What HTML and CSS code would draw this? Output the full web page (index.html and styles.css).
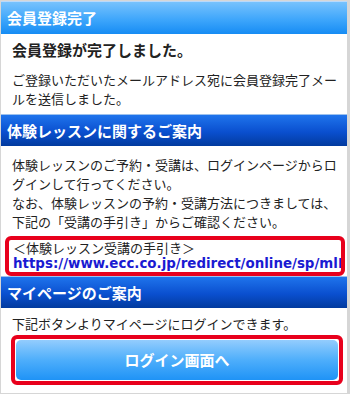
FILE: index.html
```html
<!DOCTYPE html>
<html>
	<head>
		<meta charset="utf-8">
		<title>会員登録完了</title>
		<link rel="stylesheet" href="styles.css">
	</head>
	<body>
		<div class="page">
			<h1 class="head head-light">会員登録完了</h1>
			<div class="sec">
				<p class="lead">会員登録が完了しました。</p>
				<p class="txt">ご登録いただいたメールアドレス宛に会員登録完了メールを送信しました。</p>
			</div>
			<h2 class="head">体験レッスンに関するご案内</h2>
			<div class="sec sec-info">
				<p class="txt">体験レッスンのご予約・受講は、ログインページからログインして行ってください。<br>なお、体験レッスンの予約・受講方法につきましては、下記の「受講の手引き」からご確認ください。</p>
			</div>
			<div class="mark guide">
				<p class="txt">＜体験レッスン受講の手引き＞</p>
				<a class="link" href="#">https://www.ecc.co.jp/redirect/online/sp/mlI/tebiki</a>
			</div>
			<h2 class="head">マイページのご案内</h2>
			<div class="sec sec-login">
				<p class="txt">下記ボタンよりマイページにログインできます。</p>
			</div>
			<div class="mark btnbox">
				<a class="btn" href="#">ログイン画面へ</a>
			</div>
		</div>
	</body>
</html>
```

FILE: styles.css
```css
*{
	padding: 0;
	margin: 0;
	border: 0;
}
body{
	background: #fff;
	font-family: "Noto Sans CJK JP", "Noto Sans", sans-serif;
	color: #222;
}
.page{
	width: 346px;
	height: 392px;
	border: 1px solid #d6d6d6;
	border-right-width: 3px;
	overflow: hidden;
}
.head{
	height: 31px;
	line-height: 31px;
	padding-left: 6px;
	font-size: 15px;
	font-weight: bold;
	color: #fff;
	background: linear-gradient(#1f74ec, #0a4fcf 55%, #023a9e);
	border-top: 1px solid #9cc1ee;
}
.head-light{
	height: 32px;
	border-top: 1px solid #b9d9fb;
	background: linear-gradient(#77c2fd, #3ea6fb 55%, #168cf4);
}
.sec{
	padding: 6px 4px 6px 11px;
}
.sec-info{
	padding-top: 9px;
	padding-bottom: 1px;
}
.sec-login{
	padding-bottom: 0;
}
.lead{
	font-size: 15px;
	font-weight: bold;
	line-height: 20px;
	margin-bottom: 10px;
}
.txt{
	font-size: 13px;
	line-height: 19px;
}
.mark{
	border: 4px solid #e8001c;
	border-radius: 6px;
	overflow: hidden;
	white-space: nowrap;
}
.guide{
	margin: 4px 2px 0 4px;
	padding: 0 0 0 4px;
}
.guide .txt{
	line-height: 16px;
}
.link{
	display: block;
	font-family: "DejaVu Sans", sans-serif;
	font-size: 13.4px;
	font-weight: bold;
	line-height: 16px;
	color: #1a1ad2;
	text-decoration: none;
}
.btnbox{
	margin: 2px 4px 0 10px;
	padding: 1px;
}
.btn{
	display: block;
	height: 40px;
	line-height: 40px;
	text-align: center;
	font-size: 15px;
	font-weight: bold;
	color: #fff;
	text-decoration: none;
	border-radius: 5px;
	background: linear-gradient(#93ccfd, #4eaefb 50%, #1f93f6);
}
```
